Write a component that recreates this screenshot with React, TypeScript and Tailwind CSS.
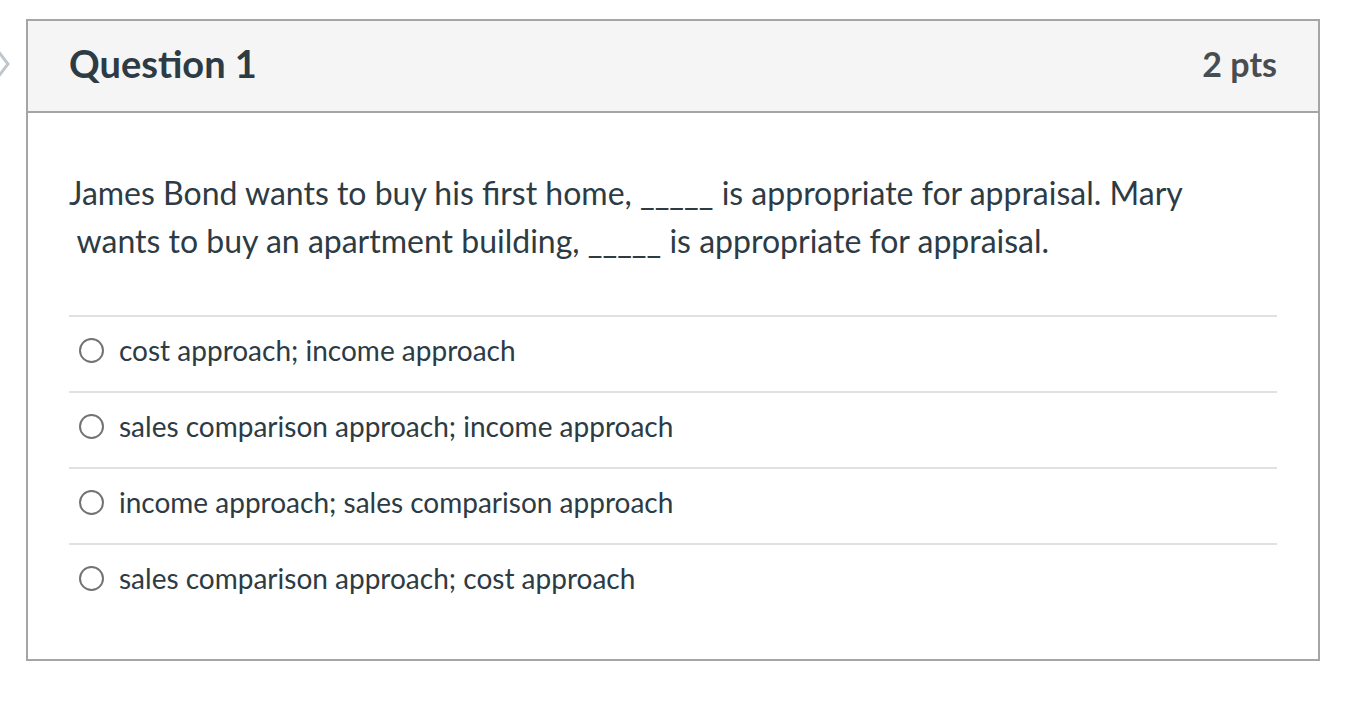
import React from "react";

const options = [
  "cost approach; income approach",
  "sales comparison approach; income approach",
  "income approach; sales comparison approach",
  "sales comparison approach; cost approach",
];

export default function App() {
  return (
    <div className="relative min-h-screen w-full bg-white pt-[19px] pl-[26px] font-['Lato','Liberation_Sans',sans-serif] text-[#2d3b45]">
      {/* bookmark arrow peeking at the left edge */}
      <svg className="absolute left-0 top-[50px]" width="10" height="28" viewBox="0 0 10 28">
        <polyline points="-2,1 8,14 -2,27" fill="none" stroke="#bfc6cc" strokeWidth="3" />
      </svg>

      <div className="w-[1294px] border-2 border-[#a5a5a5]">
        <div className="flex h-[92px] items-center justify-between border-b-2 border-[#a5a5a5] bg-[#f5f5f5] px-[41px] pb-[5px]">
          <h2 className="text-[38px] font-bold">Question 1</h2>
          <span className="text-[34px] font-bold text-[#4a4d50]">2 pts</span>
        </div>

        <div className="px-[41px] pt-[56px] pb-[40px]">
          <p className="text-[32px] leading-[48px]">
            James Bond wants to buy his first home, _____ is appropriate for appraisal. Mary
            <br />
            &nbsp;wants to buy an apartment building, _____ is appropriate for appraisal.
          </p>

          <div className="mt-[50px]">
            {options.map((o) => (
              <label
                key={o}
                className="flex h-[76px] items-center gap-[15px] border-t-2 border-[#e1e1e1] pl-[10px] pb-[8px]"
              >
                <span className="h-[25px] w-[25px] shrink-0 rounded-full border-2 border-[#737373] bg-white" />
                <span className="text-[28px]">{o}</span>
              </label>
            ))}
          </div>
        </div>
      </div>
    </div>
  );
}
